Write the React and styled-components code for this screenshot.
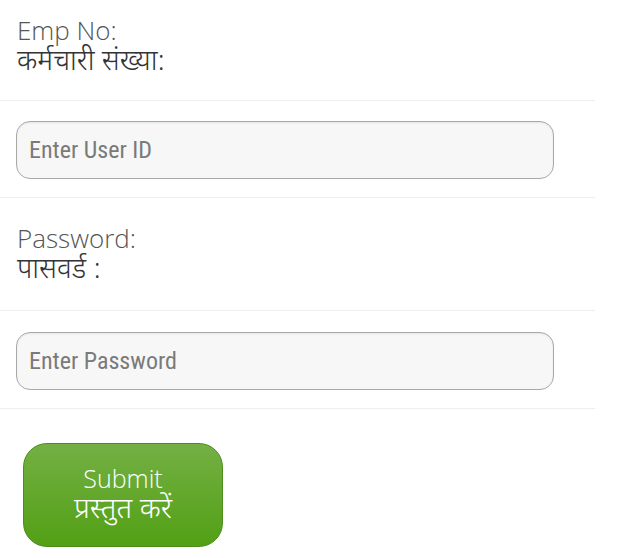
import React from "react";
import styled, { createGlobalStyle } from "styled-components";

const Global = createGlobalStyle`
  body {
    margin: 0;
    background: #ffffff;
    font-family: "Open Sans", "Noto Sans", sans-serif;
  }
`;

const Form = styled.div`
  width: 595px;
  display: flex;
  flex-direction: column;
`;

const Row = styled.div`
  border-bottom: ${(p) => (p.last ? "none" : "1px solid #eeeeee")};
  padding: ${(p) => p.pad || "16px 17px"};
`;

const Label = styled.div`
  font-weight: 300;
  font-size: 26px;
  line-height: 32px;
  color: #555555;
`;

const Hindi = styled.span`
  display: block;
  font-family: "Noto Sans Devanagari", "Noto Sans", sans-serif;
  font-weight: 300;
  font-size: ${(p) => p.size || "28px"};
  line-height: 34px;
  color: ${(p) => p.color || "#333333"};
`;

const Input = styled.input`
  box-sizing: border-box;
  width: 538px;
  height: 58px;
  margin-left: -1px;
  padding: 0 12px;
  border: 1px solid #a9a9a9;
  border-radius: 14px;
  background: #f7f7f7;
  box-shadow: inset 0 1px 2px rgba(0, 0, 0, 0.08);
  font-family: "Roboto Condensed", "Liberation Sans", Arial, sans-serif;
  font-weight: 400;
  font-size: 24px;
  color: #333;
  outline: none;

  &::placeholder {
    color: #7a7a7a;
  }
`;

const Submit = styled.button`
  display: flex;
  flex-direction: column;
  align-items: center;
  justify-content: center;
  width: 200px;
  height: 104px;
  margin-left: 6px;
  padding: 0;
  border: 1px solid #4e8d1c;
  border-radius: 24px;
  background: linear-gradient(#74b044, #52a015);
  color: #ffffff;
  font-family: "Open Sans", "Noto Sans", sans-serif;
  font-weight: 300;
  font-size: 25px;
  line-height: 32px;
  cursor: pointer;
`;

export default function App() {
  return (
    <>
      <Global />
      <Form>
        <Row pad="14px 17px 20px">
          <Label>
            Emp No:
            <Hindi>कर्मचारी संख्या:</Hindi>
          </Label>
        </Row>
        <Row pad="20px 17px 18px">
          <Input placeholder="Enter User ID" />
        </Row>
        <Row pad="24px 17px 22px">
          <Label>
            Password:
            <Hindi>पासवर्ड :</Hindi>
          </Label>
        </Row>
        <Row pad="21px 17px 18px">
          <Input type="password" placeholder="Enter Password" />
        </Row>
        <Row pad="34px 17px 12px" last>
          <Submit>
            <span>Submit</span>
            <Hindi color="#ffffff" size="29px">प्रस्तुत करें</Hindi>
          </Submit>
        </Row>
      </Form>
    </>
  );
}
